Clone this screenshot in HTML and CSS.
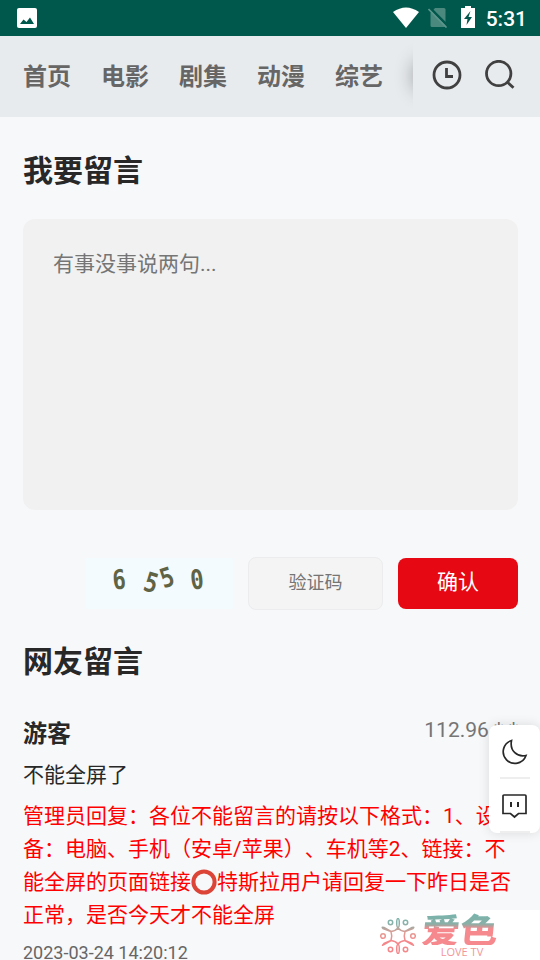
FILE: index.html
```html
<!DOCTYPE html>
<html lang="zh-CN">
<head>
<meta charset="utf-8">
<title>留言</title>
<link rel="stylesheet" href="styles.css">
</head>
<body>
<header class="status">
  <svg class="photo" viewBox="0 0 20 20"><rect width="20" height="20" rx="2" fill="#fff"/><path d="M3 16l3.500-4.500 3 2.500 3.500-4.500 4 6.500z" fill="#00574b"/></svg>
  <div class="signals">
    <svg width="26" height="21" viewBox="0 0 26 21"><path d="M0 5Q13-4 26 5L13 21z" fill="#fff"/></svg>
    <svg class="sim" width="20" height="21" viewBox="0 0 20 21"><path d="M7 1h9q1.500 0 1.500 1.500V19q0 1-1.500 1H4q-1.500 0-1.500-1.500V6z" fill="#4b897f"/><path d="M2.500 1.500l18 18" stroke="#00574b" stroke-width="2.500"/><path d="M.5 2l18 18.500" stroke="#5c958c" stroke-width="1.700"/></svg>
    <svg class="battery" width="14" height="22" viewBox="0 0 14 22"><path d="M4 0h6v2h4v20H0V2h4z" fill="#fff"/><path d="M9.500 5L3 13h3.500l-1 6 5.500-8H7.500z" fill="#00574b"/></svg>
    <span class="clock">5:31</span>
  </div>
</header>
<nav class="nav">
  <div class="tabs"><a>首页</a><a>电影</a><a>剧集</a><a>动漫</a><a>综艺</a><i class="fade"></i></div>
  <svg class="history" width="30" height="30" viewBox="0 0 30 30"><circle cx="15" cy="15" r="13" /><path d="M14.500 8v8.500H21"/></svg>
  <svg class="search" width="30" height="30" viewBox="0 0 30 30"><circle cx="13.700" cy="13.500" r="12.200"/><path d="M22.500 22.300l6 5.500"/></svg>
</nav>
<main>
  <h1>我要留言</h1>
  <div class="message">有事没事说两句...</div>
  <div class="form-row">
    <div class="captcha"><span class="d1">6</span><span class="d2">5</span><span class="d3">5</span><span class="d4">0</span></div>
    <div class="code">验证码</div>
    <div class="submit">确认</div>
  </div>
  <h2>网友留言</h2>
  <article>
    <div class="meta"><h3>游客</h3><span class="ip">112.96.*.*</span></div>
    <p class="comment">不能全屏了</p>
    <p class="reply">管理员回复：各位不能留言的请按以下格式：1、设<br>备：电脑、手机（安卓/苹果）、车机等2、链接：不<br>能全屏的页面链接<svg class="ring" viewBox="0 0 26 26"><circle cx="13" cy="13" r="10.600"/></svg>特斯拉用户请回复一下昨日是否<br>正常，是否今天才不能全屏</p>
    <time>2023-03-24 14:20:12</time>
  </article>
</main>
<aside class="tools">
  <svg width="26" height="26" viewBox="0 0 26 26"><path d="M9.500 1.500A11.700 11.700 0 1 0 24 16.500C15.500 18.500 7.500 12 9.500 1.500z"/></svg>
  <i></i>
  <svg class="chat" width="26" height="26" viewBox="0 0 26 26"><path d="M2 2h21q1 0 1 1v17.500h-7.500l-4 3.500-4-3.500H1V3q0-1 1-1z"/><path class="eyes" d="M9 9v5M16 9v5"/></svg>
  <i></i>
</aside>
<div class="brand">
  <svg class="flower" width="36" height="36" viewBox="0 0 36 36">
    <defs><linearGradient id="tone" gradientUnits="userSpaceOnUse" x1="0" y1="0" x2="0" y2="36"><stop offset=".15" stop-color="#83b3ab"/><stop offset=".42" stop-color="#e49a92"/><stop offset=".65" stop-color="#f5878b"/></linearGradient></defs>
    <g fill="none" stroke="url(#tone)" stroke-width="1.500">
      <path d="M18 10q2.500 3 7 3.500-1.500 4.500 0 9-4.500.5-7 3.500-2.500-3-7-3.500 1.500-4.500 0-9 4.500-.5 7-3.500z"/>
      <ellipse cx="18" cy="5" rx="1.300" ry="4.500"/><ellipse cx="18" cy="31" rx="1.300" ry="4.500"/>
      <path d="M25 13.500l7-4q3-1 1 1l-8 3zM11 13.500l-7-4q-3-1-1 1l8 3zM25 22.500l7 3q3 3 0 1l-7-4zM11 22.500l-7 3q-3 3 0 1l7-4z"/>
      <circle cx="10.500" cy="4.500" r="2.200"/><circle cx="25.500" cy="4.500" r="2.200"/><circle cx="3" cy="18" r="2.300"/><circle cx="33" cy="18" r="2.300"/><circle cx="10.500" cy="31.500" r="2.200"/><circle cx="25.500" cy="31.500" r="2.200"/>
    </g>
  </svg>
  <div class="brand-text"><strong>爱色</strong><span>LOVE TV</span></div>
</div>
</body>
</html>
```
FILE: styles.css
```css
* { box-sizing: border-box; }
body { margin: 0; height: 960px; overflow: hidden; background: #f7f8fa; color: #282828; font: 21px/33px Roboto, "Noto Sans CJK SC", sans-serif; text-spacing-trim: space-all; }
h1, h2, h3, p { margin: 0; }
svg { display: block; flex: none; }
.status { height: 36px; background: #00574b; display: flex; justify-content: space-between; padding: 0 13px 0 17px; }
.photo { width: 20px; height: 20px; margin-top: 8px; }
.signals { display: flex; align-items: flex-start; padding-top: 7px; }
.sim { margin-left: 9px; }
.battery { margin: -1px 0 0 13px; }
.clock { color: #fff; font-size: 21px; font-weight: 500; line-height: 24px; margin-left: 11px; }
.nav { height: 81px; background: #e8ebee; display: flex; align-items: flex-start; padding-left: 23px; }
.tabs { position: relative; width: 390px; height: 81px; overflow: hidden; display: flex; gap: 30px; font-size: 24px; line-height: 36px; font-weight: 700; color: #666; padding-top: 23px; white-space: nowrap; }
.fade { position: absolute; left: 392px; top: 25px; width: 20px; height: 30px; border-radius: 50%; box-shadow: 0 0 20px rgba(0, 0, 0, .45); }
.history, .search { fill: none; stroke: #404040; stroke-width: 2.800; margin-top: 24px; }
.history { margin-left: 19px; }
.search { margin-left: 23px; }
main { padding: 0 22px 0 23px; }
h1, h2 { font-size: 30px; line-height: 44px; font-weight: 700; }
h1 { padding-top: 32px; height: 102px; }
.message { height: 291px; background: #f1f1f1; border-radius: 12px; padding: 29px 30px; color: #757575; }
.form-row { display: flex; justify-content: flex-end; align-items: flex-start; margin-top: 47px; height: 53px; }
.captcha { width: 147px; height: 51px; margin: 1px 15px 0 0; background: #f3fbff; position: relative; color: #606344; font: bold 27px/28px "DejaVu Sans Mono", monospace; }
.captcha span { position: absolute; width: 16px; }
.d1 { left: 25px; top: 8px; transform: rotate(-5deg) scaleX(.82); }
.d2 { left: 57px; top: 11px; transform: rotate(17deg) scaleX(.82); }
.d3 { left: 73px; top: 6px; transform: rotate(-18deg) scaleX(.82); }
.d4 { left: 103px; top: 8px; transform: rotate(-7deg) scaleX(.82); }
.code { width: 135px; height: 53px; border: 1px solid #ececee; border-radius: 8px; background: #f4f4f4; text-align: center; font-size: 18px; line-height: 50px; color: #757575; }
.submit { width: 120px; height: 51px; margin: 1px 0 0 15px; border-radius: 8px; background: #e60813; color: #fff; text-align: center; line-height: 48px; }
h2 { margin-top: 30px; }
.meta { display: flex; justify-content: space-between; margin-top: 32px; height: 43px; }
h3 { font-size: 24px; line-height: 36px; }
.ip { color: #757575; line-height: 29px; }
.comment { height: 41px; }
.reply { color: #f00; white-space: nowrap; height: 132px; }
.ring { display: inline-block; width: 26px; height: 26px; margin: -4px 0; vertical-align: -5px; position: relative; top: -3px; fill: none; stroke: #db4437; stroke-width: 4; }
time { display: block; font-size: 18px; line-height: 24px; color: #666; margin-top: 9px; }
.tools { position: absolute; right: 0; top: 725px; width: 51px; height: 108px; background: #fff; border-radius: 8px; box-shadow: 0 0 12px rgba(0, 0, 0, .12); display: flex; flex-direction: column; align-items: center; padding-top: 14px; overflow: hidden; }
.tools svg { fill: none; stroke: #282828; stroke-width: 1.700; }
.tools i { width: 30px; height: 2px; background: #eee; margin-top: 12px; flex: none; }
.tools .chat { margin-top: 14px; }
.tools .eyes { stroke-width: 2; }
.brand { position: absolute; right: 0; bottom: 0; width: 200px; height: 50px; background: #fff; display: flex; }
.flower { margin: 8px 0 0 40px; }
.brand-text { display: flex; flex-direction: column; align-items: center; width: 76px; margin-left: 8px; }
.brand-text strong { font: 900 38px/38px "Noto Sans CJK SC", sans-serif; transform-origin: 50% 0; transform: translateY(1px) skewX(-6deg) scaleY(.9); color: transparent; background: linear-gradient(#79b3ab 12%, #8aafa7 38%, #f5898d 52%, #f5898d); background-clip: text; -webkit-background-clip: text; }
.brand-text span { font: 11px/12px "Open Sans", sans-serif; color: #f39699; margin-top: -2px; white-space: nowrap; }
```
